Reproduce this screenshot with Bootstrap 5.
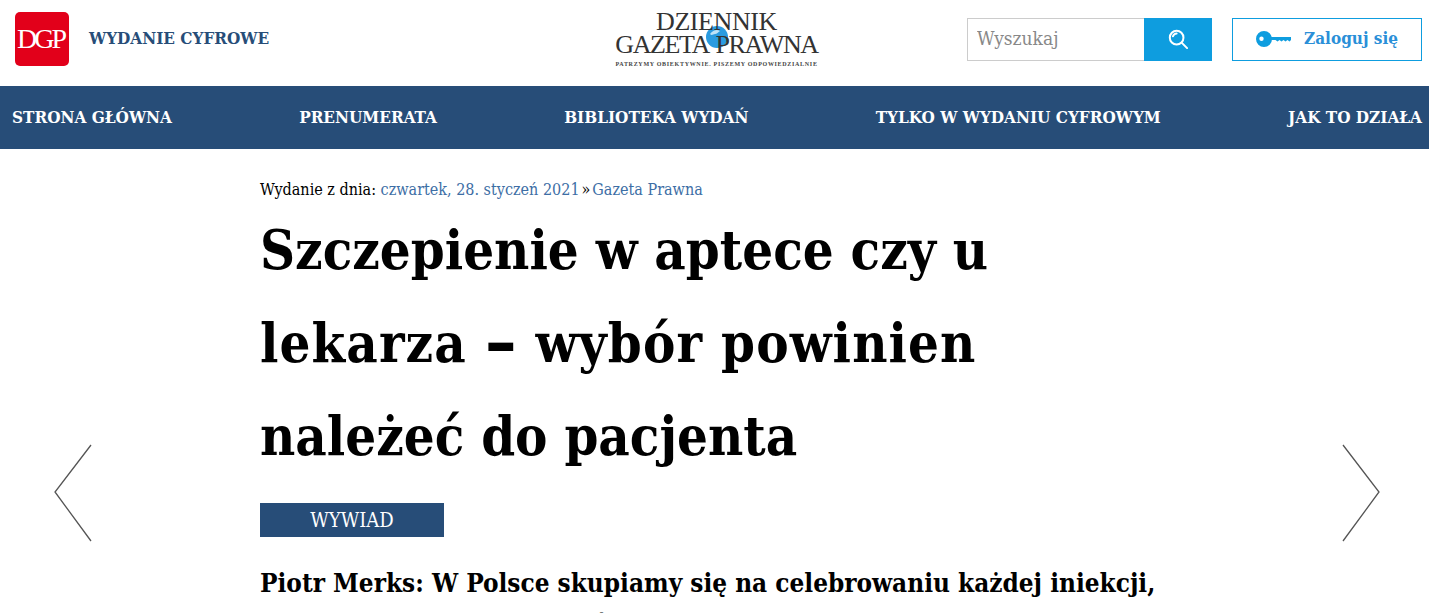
<!DOCTYPE html>
<html lang="pl"><head><meta charset="utf-8">
<link href="https://cdn.jsdelivr.net/npm/bootstrap@5.3.0/dist/css/bootstrap.min.css" rel="stylesheet">
<style>
html,body{height:613px;overflow:hidden}
body{font-family:"DejaVu Serif Condensed","DejaVu Serif",serif;background:#fff;color:#000}
.top-bar{height:86px;padding:0 7px 8px 15px}
.dgp-logo{width:54px;height:54px;background:#e2001a;border-radius:5px;color:#fff;font-family:"Liberation Serif",serif;font-size:28px;letter-spacing:-3px;line-height:54px;text-align:center;padding-right:3px}
.edition-name{font-weight:700;font-size:17px;color:#274d78;margin-left:20px}
.brand-col{position:absolute;left:615px;top:9px;width:203px;text-align:center;color:#333;font-family:"Liberation Serif",serif}
.brand-1{font-size:26px;line-height:25px;letter-spacing:-.4px;position:relative}
.brand-2{font-size:26px;line-height:21px;letter-spacing:-1.4px;word-spacing:3px;white-space:nowrap;position:relative}
.brand-3{font-size:6px;line-height:10px;margin-top:4px;letter-spacing:.7px;font-weight:700;white-space:nowrap;color:#444}
.brand-globe{position:absolute;left:90px;top:16px}
.search-box{width:245px;height:43px;margin-right:20px}
.search-field{width:177px;flex:0 0 177px;height:43px;border:1px solid #ccc;border-right:0;border-radius:0;padding:0 9px 2px;font-size:19px;font-family:inherit;color:#888}
.search-field::placeholder{color:#888}
.search-go{width:68px;height:43px;background:#0e9ddf;border:0;border-radius:0;padding:0}
.login-btn{width:190px;height:43px;border:1px solid #0e9ddf;border-radius:0;color:#2a8fd8;font-family:inherit;font-weight:700;font-size:17px;padding:0;gap:12px}
.login-btn span{margin-left:1px}
.main-menu{height:63px;background:#274d78;padding:0 7px 0 12px}
.main-menu a{color:#fff;font-weight:700;font-size:17px;text-decoration:none}
.page-area{padding:0 0 0 260px;height:464px;position:relative}
.crumbs{font-size:16px;padding-top:31px;line-height:20px}
.crumbs a{color:#3d6ea5;text-decoration:none}
.crumb-sep{margin:0 2px}
.headline{font-weight:700;font-size:54px;line-height:93px;margin:0;width:800px;margin-top:4px}
.headline-mid{letter-spacing:1.1px}
.headline-dash{font-size:1.3em;vertical-align:-.06em;line-height:0}
.tag-strip{width:184px;height:34px;background:#274d78;color:#fff;font-size:20px;line-height:34px;text-align:center;margin-top:20px}
.lead-text{font-weight:700;font-size:25.900px;line-height:42px;width:920px;margin-top:25px}
.arrow-nav{position:absolute;top:295px}
</style></head><body>
<header class="top-bar d-flex align-items-center justify-content-between position-relative">
 <div class="d-flex align-items-center"><div class="dgp-logo">DGP</div><span class="edition-name">WYDANIE CYFROWE</span></div>
 <div class="brand-col"><svg class="brand-globe" width="24" height="24" viewBox="0 0 24 24"><circle cx="12" cy="12" r="11" fill="#2a9be0"/><path d="M5 9c3-4 7-5 10-3-2 1-3 3-5 3S7 11 5 9z" fill="#bfe3f7"/></svg><div class="brand-1">DZIENNIK</div><div class="brand-2">GAZETA PRAWNA</div><div class="brand-3">PATRZYMY OBIEKTYWNIE. PISZEMY ODPOWIEDZIALNIE</div></div>
 <div class="d-flex align-items-center">
  <div class="search-box d-flex"><input class="form-control search-field" placeholder="Wyszukaj"><button class="btn search-go d-flex align-items-center justify-content-center" aria-label="Szukaj"><svg width="20" height="20" viewBox="0 0 22 22" fill="none" stroke="#fff" stroke-width="2.200"><circle cx="9.500" cy="9.500" r="7.500"/><path d="M15 15l6 6M9.500 5a4.500 4.500 0 0 0-4 3" stroke-linecap="round"/></svg></button></div>
  <a class="btn login-btn d-flex align-items-center justify-content-center" href="#"><svg width="35" height="16" viewBox="0 0 35 16"><path fill-rule="evenodd" d="M8 0a8 8 0 1 1 0 16A8 8 0 0 1 8 0zM5.500 5.500a2.200 2.200 0 1 0 0 4.400 2.200 2.200 0 0 0 0-4.400z" fill="#0e9ddf"/><path d="M14 6h21v3l-1.500 1.500-2-1.500-2 1.500-2-1.500-2 1.500-2-1.500-2 1.500-2-1.500h-5.500z" fill="#0e9ddf"/></svg><span>Zaloguj się</span></a>
 </div>
</header>
<nav class="main-menu d-flex align-items-center justify-content-between">
 <a href="#">STRONA GŁÓWNA</a><a href="#">PRENUMERATA</a><a href="#">BIBLIOTEKA WYDAŃ</a><a href="#">TYLKO W WYDANIU CYFROWYM</a><a href="#">JAK TO DZIAŁA</a>
</nav>
<main class="page-area">
 <div class="crumbs">Wydanie z dnia: <a href="#">czwartek, 28. styczeń 2021</a><span class="crumb-sep">»</span><a href="#">Gazeta Prawna</a></div>
 <h1 class="headline">Szczepienie w aptece czy u<br><span class="headline-mid">lekarza <span class="headline-dash">–</span> wybór powinien</span><br>należeć do pacjenta</h1>
 <div class="tag-strip">WYWIAD</div>
 <div class="lead-text">Piotr Merks: W Polsce skupiamy się na celebrowaniu każdej iniekcji, podczas gdy należy myśleć o masowości szczepień</div>
 <svg class="arrow-nav" style="left:54px" width="38" height="98" viewBox="0 0 38 98" fill="none" stroke="#555" stroke-width="1.300"><path d="M37 1L1 48l36 49"/></svg>
 <svg class="arrow-nav" style="left:1342px" width="38" height="98" viewBox="0 0 38 98" fill="none" stroke="#555" stroke-width="1.300"><path d="M1 1l36 47L1 97"/></svg>
</main>
<script src="https://cdn.jsdelivr.net/npm/bootstrap@5.3.0/dist/js/bootstrap.bundle.min.js"></script>
</body></html>
